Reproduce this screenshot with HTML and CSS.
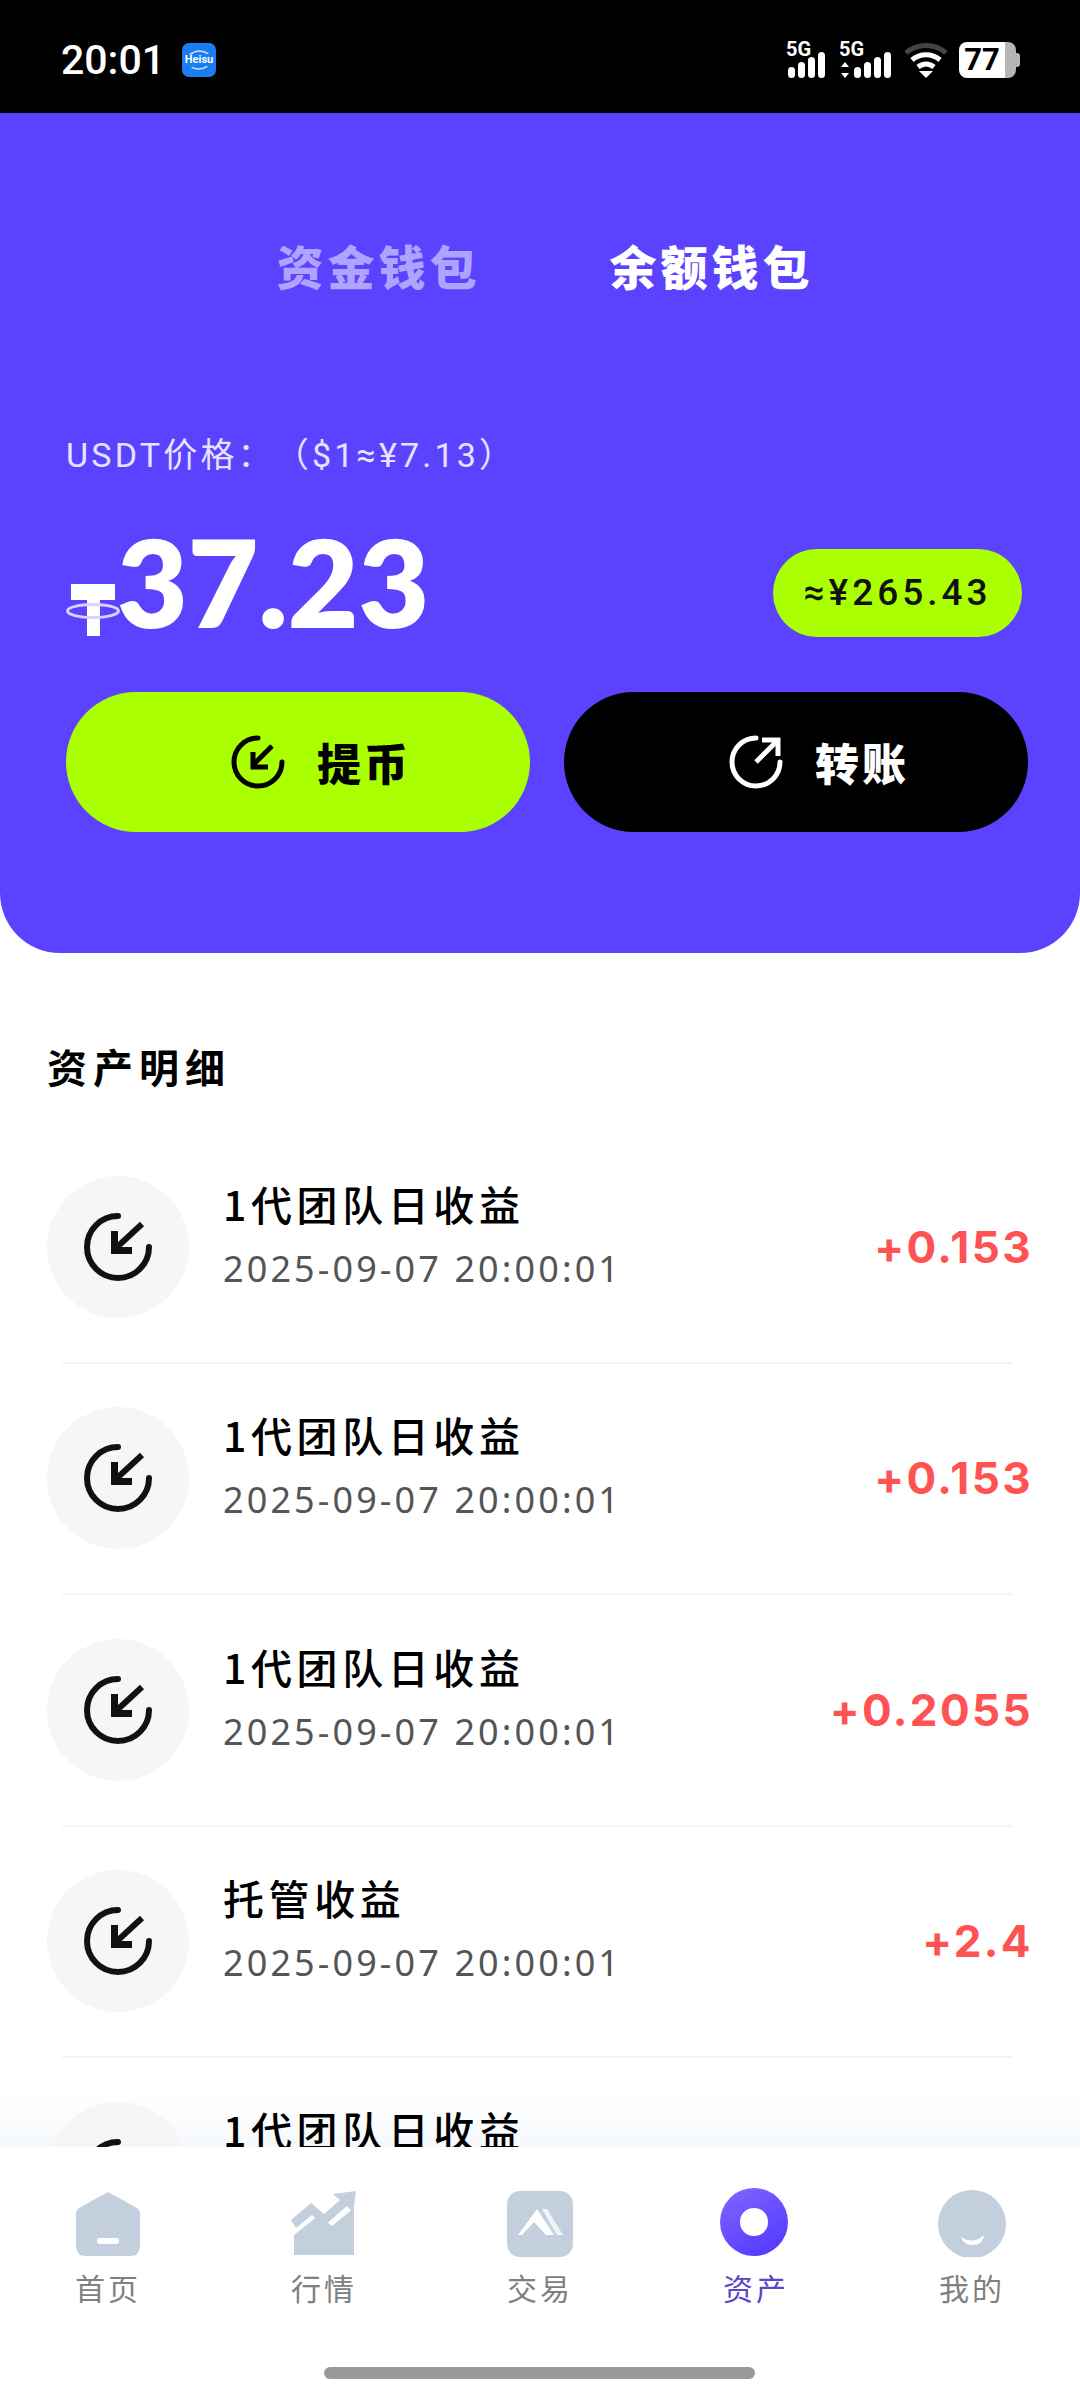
FILE: index.html
```html
<!DOCTYPE html>
<html>
<head>
<meta name="viewport" content="width=device-width, initial-scale=1.0"/>
<link rel="stylesheet" href="styles.css">
</head>
<body>
<svg class="defs" width="0" height="0">
  <symbol id="income" viewBox="0 0 72 72">
    <g fill="none" stroke="#111" stroke-width="6" stroke-linecap="round">
      <path d="M36 5A31 31 0 1 0 67 36"/>
      <path d="M60 13L34 37" stroke-linecap="butt"/>
    </g>
    <path d="M29 20H36V36H50V43H29Z" fill="#111"/>
  </symbol>
</svg>
<div class="page">

  <div class="statusbar">
    <div class="status-left">
      <span class="clock">20:01</span>
      <span class="appicon">
        <svg width="34" height="34" viewBox="0 0 35 35" class="swoosh">
          <path d="M8 12Q17 5 27 11" fill="none" stroke="#cfe4ff" stroke-width="1.5"/>
          <path d="M10 25Q18 29 26 24" fill="none" stroke="#cfe4ff" stroke-width="1.5"/>
        </svg>
        <span>Heisu</span>
      </span>
    </div>
    <div class="status-right">
      <svg width="44" height="44" viewBox="0 -8 44 44" class="signal">
        <text x="0" y="14" class="net">5G</text>
        <rect x="2" y="25" width="7" height="11" rx="3.5" fill="#fff"/>
        <rect x="12" y="20" width="7" height="16" rx="3.5" fill="#fff"/>
        <rect x="22" y="15" width="7" height="21" rx="3.5" fill="#fff"/>
        <rect x="32" y="10" width="7" height="26" rx="3.5" fill="#fff"/>
      </svg>
      <svg width="56" height="44" viewBox="0 -8 56 44" class="signal">
        <text x="0" y="14" class="net">5G</text>
        <path d="M6 20l4 5H2zM6 36l4-5H2z" fill="#fff"/>
        <rect x="15" y="25" width="7" height="11" rx="3.5" fill="#fff"/>
        <rect x="25" y="20" width="7" height="16" rx="3.5" fill="#fff"/>
        <rect x="35" y="15" width="7" height="21" rx="3.5" fill="#fff"/>
        <rect x="45" y="10" width="7" height="26" rx="3.5" fill="#fff"/>
      </svg>
      <svg width="44" height="36" viewBox="0 0 44 36" class="wifi">
        <path d="M2 11C13 1 31 1 42 11" fill="none" stroke="#444" stroke-width="5"/>
        <path d="M8 18C16 11 28 11 36 18" fill="none" stroke="#fff" stroke-width="5"/>
        <path d="M14 25C19 21 25 21 30 25" fill="none" stroke="#fff" stroke-width="5"/>
        <path d="M15 29h14l-7 7z" fill="#fff"/>
      </svg>
      <div class="battery"><div class="battery-fill">77</div><div class="battery-rest"></div><div class="battery-tip"></div></div>
    </div>
  </div>

  <div class="hero">
    <div class="wallet-tabs">
      <span class="wallet-tab dim">资金钱包</span>
      <span class="wallet-tab">余额钱包</span>
    </div>
    <div class="price">USDT价格：（$1≈¥7.13）</div>
    <div class="amount-row">
      <svg class="tether" width="54" height="54" viewBox="0 0 54 54">
        <rect x="5" y="0" width="44" height="16" fill="#fff"/>
        <rect x="21" y="0" width="13" height="52" fill="#fff"/>
        <ellipse cx="27" cy="27" rx="25.5" ry="6.5" fill="none" stroke="#d8d2ff" stroke-width="3"/>
      </svg>
      <span class="amount">37.23</span>
      <span class="cny-pill">≈¥265.43</span>
    </div>
    <div class="actions">
      <div class="action lime">
        <svg width="54" height="54" viewBox="0 0 54 54" fill="none" stroke="#000" stroke-width="5">
          <path d="M27 3A24 24 0 1 0 51 27" stroke-linecap="round"/>
          <path d="M41 11L22 30"/>
          <path d="M22 17V32H37"/>
        </svg>
        <span>提币</span>
      </div>
      <div class="action black">
        <svg width="54" height="54" viewBox="0 0 54 54" fill="none" stroke="#fff" stroke-width="5">
          <path d="M27 3A24 24 0 1 0 51 27" stroke-linecap="round"/>
          <path d="M27 27L47 7"/>
          <path d="M33 5H49V21"/>
        </svg>
        <span>转账</span>
      </div>
    </div>
  </div>

  <div class="section-title">资产明细</div>

  <div class="list">
    <div class="row">
      <div class="row-icon"><svg width="72" height="72"><use href="#income"/></svg></div>
      <div class="row-text"><div class="row-title">1代团队日收益</div><div class="row-date">2025-09-07 20:00:01</div></div>
      <div class="row-value">+0.153</div>
    </div>
    <div class="row">
      <div class="row-icon"><svg width="72" height="72"><use href="#income"/></svg></div>
      <div class="row-text"><div class="row-title">1代团队日收益</div><div class="row-date">2025-09-07 20:00:01</div></div>
      <div class="row-value">+0.153</div>
    </div>
    <div class="row">
      <div class="row-icon"><svg width="72" height="72"><use href="#income"/></svg></div>
      <div class="row-text"><div class="row-title">1代团队日收益</div><div class="row-date">2025-09-07 20:00:01</div></div>
      <div class="row-value">+0.2055</div>
    </div>
    <div class="row">
      <div class="row-icon"><svg width="72" height="72"><use href="#income"/></svg></div>
      <div class="row-text"><div class="row-title">托管收益</div><div class="row-date">2025-09-07 20:00:01</div></div>
      <div class="row-value">+2.4</div>
    </div>
    <div class="row">
      <div class="row-icon"><svg width="72" height="72"><use href="#income"/></svg></div>
      <div class="row-text"><div class="row-title">1代团队日收益</div><div class="row-date">2025-09-07 20:00:01</div></div>
      <div class="row-value">+0.153</div>
    </div>
  </div>

  <div class="tabbar">
    <div class="tab">
      <svg width="66" height="66" viewBox="0 0 66 66">
        <path d="M33 1L62 17Q65 19 65 22V55Q65 65 55 65H11Q1 65 1 55V22Q1 19 4 17Z" fill="#c3cfdc"/>
        <rect x="22" y="47" width="22" height="6" rx="3" fill="#fff"/>
      </svg>
      <span>首页</span>
    </div>
    <div class="tab">
      <svg width="66" height="66" viewBox="0 0 66 66">
        <path d="M3 64V44L28 24L41 35L63 17V64Z" fill="#c3cfdc"/>
        <path d="M0 29L20 12L33 23L49 9L42 3L65 0L62 22L56 15L33 35L21 24L5 37Z" fill="#c3cfdc"/>
      </svg>
      <span>行情</span>
    </div>
    <div class="tab">
      <svg width="66" height="66" viewBox="0 0 66 66">
        <rect x="0" y="0" width="66" height="66" rx="13" fill="#c3cfdc"/>
        <path d="M11 44L30 18L47 44H39L27 31L15 44Z" fill="#fff"/>
        <path d="M35 18H40L56 44H50Z" fill="#f0f3f7"/>
      </svg>
      <span>交易</span>
    </div>
    <div class="tab active">
      <svg width="70" height="70" viewBox="0 0 70 70">
        <defs><linearGradient id="assetfill" x1="0.2" y1="0" x2="0.8" y2="1"><stop offset="0" stop-color="#7c64ff"/><stop offset="1" stop-color="#5438ff"/></linearGradient></defs>
        <circle cx="35" cy="35" r="34" fill="url(#assetfill)"/>
        <path d="M35 21Q41 21 45 25Q49 29 49 35Q49 41 45 45Q41 49 35 49Q29 49 25 45Q21 41 21 35Q21 29 25 25Q29 21 35 21Z" fill="#fff"/>
      </svg>
      <span>资产</span>
    </div>
    <div class="tab">
      <svg width="70" height="70" viewBox="0 0 70 70">
        <circle cx="35" cy="37" r="34" fill="#c3cfdc"/>
        <path d="M24 50Q36 58 47 48Q46 58 35 58Q27 58 24 50Z" fill="#fff"/>
      </svg>
      <span>我的</span>
    </div>
    <div class="homebar"></div>
  </div>

</div>
</body>
</html>
```

FILE: styles.css
```css
* {box-sizing: border-box;}
html, body {margin: 0; padding: 0; background: #fff;}
body {font-family: "Noto Sans CJK SC", "Noto Sans", sans-serif;}
.defs {position: absolute;}

.page {
  position: relative;
  width: 1080px;
  height: 2400px;
  overflow: hidden;
  background: linear-gradient(#fff 2090px, #f6f9fc 2147px);
}

/* status bar */
.statusbar {
  height: 113px;
  background: #000;
  color: #fff;
  display: flex;
  justify-content: space-between;
  align-items: flex-start;
  padding: 42px 60px 0 61px;
}
.status-left {display: flex; align-items: center; gap: 17px;}
.clock {font-family: Roboto, sans-serif; font-size: 41px; font-weight: 500; line-height: 36px;}
.appicon {
  position: relative;
  width: 34px;
  height: 34px;
  border-radius: 7px;
  background: #1a7df0;
  display: flex;
  align-items: center;
  justify-content: center;
}
.swoosh {position: absolute; left: 0; top: 0;}
.appicon span {position: relative; font-family: Roboto, sans-serif; font-size: 11px; font-weight: 700; line-height: 12px; color: #fff;}
.status-right {display: flex; align-items: flex-start; gap: 9px;}
.signal {margin-top: -8px;}
.wifi {margin-right: 2px;}
.net {font-family: Roboto, sans-serif; font-size: 20px; font-weight: 700; fill: #fff;}
.battery {display: flex; align-items: center; height: 36px;}
.battery-fill {
  width: 46px;
  height: 36px;
  background: #fff;
  border-radius: 8px 0 0 8px;
  color: #000;
  font-family: Roboto, sans-serif;
  font-size: 31px;
  font-weight: 700;
  line-height: 36px;
  text-align: center;
}
.battery-rest {width: 11px; height: 36px; background: #b5b5b5; border-radius: 0 8px 8px 0;}
.battery-tip {width: 4px; height: 14px; background: #b5b5b5; border-radius: 0 3px 3px 0;}

/* purple header */
.hero {
  height: 840px;
  background: #5b42ff;
  border-radius: 0 0 60px 60px;
  padding: 123px 52px 0 66px;
}
.wallet-tabs {display: flex; justify-content: center; gap: 129px; padding-right: 4px;}
.wallet-tab {
  font-size: 47px;
  font-weight: 900;
  letter-spacing: 4px;
  line-height: 58px;
  color: #fff;
}
.wallet-tab.dim {color: #b0a3ff;}
.price {
  margin-top: 138px;
  font-family: Roboto, "Noto Sans CJK SC", sans-serif;
  font-size: 34px;
  letter-spacing: 3.2px;
  line-height: 46px;
  text-spacing-trim: space-all;
  color: #e6e2ff;
}
.amount-row {display: flex; align-items: center; height: 120px; margin-top: 43px;}
.tether {align-self: flex-end; margin: 0 -3px 3px 0;}
.amount {
  font-family: Lato, sans-serif;
  font-size: 122px;
  font-weight: 800;
  line-height: 120px;
  color: #fff;
}
.cny-pill {
  margin: 24px 6px 0 auto;
  width: 249px;
  height: 88px;
  border-radius: 44px;
  background: #aaff00;
  color: #111;
  font-family: Roboto, sans-serif;
  font-size: 37px;
  font-weight: 500;
  letter-spacing: 4px;
  line-height: 88px;
  text-align: center;
}
.actions {display: flex; gap: 34px; margin-top: 51px;}
.action {
  width: 464px;
  height: 140px;
  border-radius: 70px;
  padding-left: 46px;
  display: flex;
  align-items: center;
  justify-content: center;
  gap: 32px;
  font-size: 44px;
  font-weight: 900;
  letter-spacing: 3px;
}
.action.lime {background: #aaff00; color: #000;}
.action.black {background: #000; color: #fff;}

/* list */
.section-title {
  padding: 89px 0 0 47px;
  font-size: 40px;
  font-weight: 700;
  letter-spacing: 6px;
  line-height: 48px;
  color: #000;
}
.list {margin-top: 41px;}
.row {
  height: 231.5px;
  padding: 0 47px 0 47px;
  display: flex;
  align-items: center;
  position: relative;
}
.row::after {
  content: "";
  position: absolute;
  left: 62px;
  right: 68px;
  bottom: -1px;
  height: 2px;
  background: #f4f4f4;
}
.row-icon {
  width: 142px;
  height: 142px;
  border-radius: 50%;
  background: #f6f6f6;
  display: flex;
  align-items: center;
  justify-content: center;
}
.row-text {margin: 0 0 26px 34px; flex: 1;}
.row-title {font-size: 41px; font-weight: 500; letter-spacing: 4.6px; line-height: 54px; color: #000;}
.row-date {
  margin-top: 16px;
  font-family: "Noto Sans", sans-serif;
  font-size: 36px;
  letter-spacing: 3.1px;
  line-height: 46px;
  color: #555;
}
.row-value {
  font-family: Inter, sans-serif;
  font-size: 44px;
  font-weight: 700;
  letter-spacing: 2.4px;
  color: #ff5252;
}

/* bottom nav */
.tabbar {
  position: absolute;
  left: 0;
  right: 0;
  bottom: 0;
  height: 253px;
  background: #fff;
  display: flex;
  padding-top: 40px;
}
.tab {
  width: 216px;
  height: 120px;
  display: flex;
  flex-direction: column;
  align-items: center;
  justify-content: flex-end;
  gap: 10px;
  font-size: 30px;
  letter-spacing: 3px;
  line-height: 40px;
  color: #808080;
}
.tab.active {color: #5a45c8;}
.tab.active svg {margin-right: 5px;}
.homebar {
  position: absolute;
  left: 324px;
  top: 220px;
  width: 431px;
  height: 12px;
  border-radius: 6px;
  background: #9a9a9a;
}
```
